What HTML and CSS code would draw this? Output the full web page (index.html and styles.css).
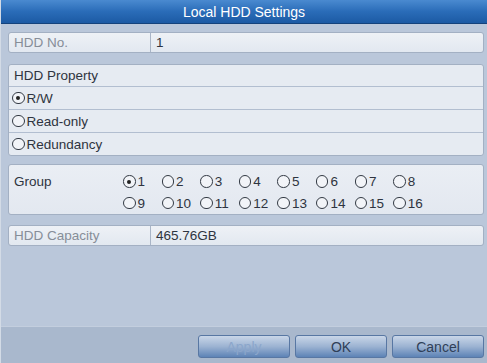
FILE: index.html
```html
<!DOCTYPE html>
<html lang="en">
<head>
    <meta charset="UTF-8">
    <title>Local HDD Settings</title>
    <link rel="stylesheet" href="styles.css">
</head>
<body>

    <div class="dialog">
        <div class="title-bar">Local HDD Settings</div>

        <div class="content">
            <div class="field-row">
                <div class="field-label">HDD No.</div>
                <div class="field-value">1</div>
            </div>

            <div class="property-box">
                <div class="prop-row prop-head">HDD Property</div>
                <div class="prop-row"><span class="radio checked"></span>R/W</div>
                <div class="prop-row"><span class="radio"></span>Read-only</div>
                <div class="prop-row"><span class="radio"></span>Redundancy</div>
            </div>

            <div class="group-box">
                <div class="group-label">Group</div>
                <div class="group-grid">
                    <label class="group-item"><span class="radio checked"></span>1</label>
                    <label class="group-item"><span class="radio"></span>2</label>
                    <label class="group-item"><span class="radio"></span>3</label>
                    <label class="group-item"><span class="radio"></span>4</label>
                    <label class="group-item"><span class="radio"></span>5</label>
                    <label class="group-item"><span class="radio"></span>6</label>
                    <label class="group-item"><span class="radio"></span>7</label>
                    <label class="group-item"><span class="radio"></span>8</label>
                    <label class="group-item"><span class="radio"></span>9</label>
                    <label class="group-item"><span class="radio"></span>10</label>
                    <label class="group-item"><span class="radio"></span>11</label>
                    <label class="group-item"><span class="radio"></span>12</label>
                    <label class="group-item"><span class="radio"></span>13</label>
                    <label class="group-item"><span class="radio"></span>14</label>
                    <label class="group-item"><span class="radio"></span>15</label>
                    <label class="group-item"><span class="radio"></span>16</label>
                </div>
            </div>

            <div class="field-row capacity">
                <div class="field-label">HDD Capacity</div>
                <div class="field-value">465.76GB</div>
            </div>
        </div>

        <div class="footer">
            <button class="btn disabled">Apply</button>
            <button class="btn">OK</button>
            <button class="btn">Cancel</button>
        </div>
    </div>

</body>
</html>
```

FILE: styles.css
```css
body {
    margin: 0;
    padding: 0;
    font-family: 'Liberation Sans', Arial, sans-serif;
    font-size: 13.5px;
    color: #2e3440;
}

.dialog {
    width: 487px;
    height: 363px;
    background-color: #bac7da;
    display: flex;
    flex-direction: column;
    border-left: 1px solid #d3dbe6;
    box-sizing: border-box;
}

.title-bar {
    height: 24px;
    line-height: 24px;
    text-align: center;
    color: #fff;
    font-size: 14px;
    background: linear-gradient(#4a8ad0, #2a6cb8 50%, #1c5aa4);
    border-bottom: 1px solid #14427c;
    box-sizing: border-box;
}

.content {
    flex: 1;
    padding: 8px 3px 0 7px;
}

.field-row {
    display: flex;
    height: 21px;
    border: 1px solid #a3b0c3;
    border-radius: 3px;
    background: linear-gradient(#eef1f6, #e2e8f0);
    box-sizing: border-box;
}

.field-label {
    width: 142px;
    box-sizing: border-box;
    padding-left: 5px;
    line-height: 19px;
    color: #868d98;
    border-right: 1px solid #a9b5c7;
}

.field-value {
    flex: 1;
    padding-left: 5px;
    line-height: 19px;
    color: #2e3440;
}

.property-box {
    margin-top: 11px;
    border: 1px solid #a3b0c3;
    border-radius: 3px;
    background: #e6ebf2;
}

.prop-row {
    height: 22px;
    display: flex;
    align-items: center;
    padding-left: 3px;
    border-top: 1px solid #b2bed0;
}

.prop-head {
    padding-left: 5px;
    border-top: none;
    height: 21px;
}

.radio {
    display: inline-block;
    width: 10.5px;
    height: 10.5px;
    border: 1.5px solid #333a44;
    border-radius: 50%;
    margin-right: 2px;
    position: relative;
    background: #f2f4f8;
}

.radio.checked::after {
    content: '';
    position: absolute;
    left: 3.25px;
    top: 3.25px;
    width: 4px;
    height: 4px;
    border-radius: 50%;
    background: #222;
}

.group-box {
    margin-top: 8px;
    height: 51px;
    display: flex;
    border: 1px solid #a3b0c3;
    border-radius: 3px;
    background: linear-gradient(#eaeef4, #e3e8f0);
    box-sizing: border-box;
    padding-top: 9px;
}

.group-label {
    width: 109px;
    padding-left: 5px;
}

.group-grid {
    display: grid;
    grid-template-columns: repeat(8, 38.6px);
    row-gap: 3px;
}

.group-item {
    display: flex;
    align-items: center;
    height: 15px;
}

.capacity {
    margin-top: 10px;
}

.footer {
    height: 37px;
    background-color: #a9b8cd;
    border-top: 1px solid #c3cede;
    display: flex;
    justify-content: flex-end;
    align-items: flex-start;
    gap: 5px;
    padding: 8px 3px 0 0;
    box-sizing: border-box;
}

.btn {
    width: 92px;
    height: 23px;
    font-family: 'Liberation Sans', Arial, sans-serif;
    font-size: 14px;
    color: #2f3f58;
    background: linear-gradient(#c9d6e8, #9cb3d2 50%, #5d83b6);
    border: 1px solid #5877a3;
    border-radius: 3px;
    padding: 0;
}

.btn.disabled {
    color: #8ba6cb;
}
```
